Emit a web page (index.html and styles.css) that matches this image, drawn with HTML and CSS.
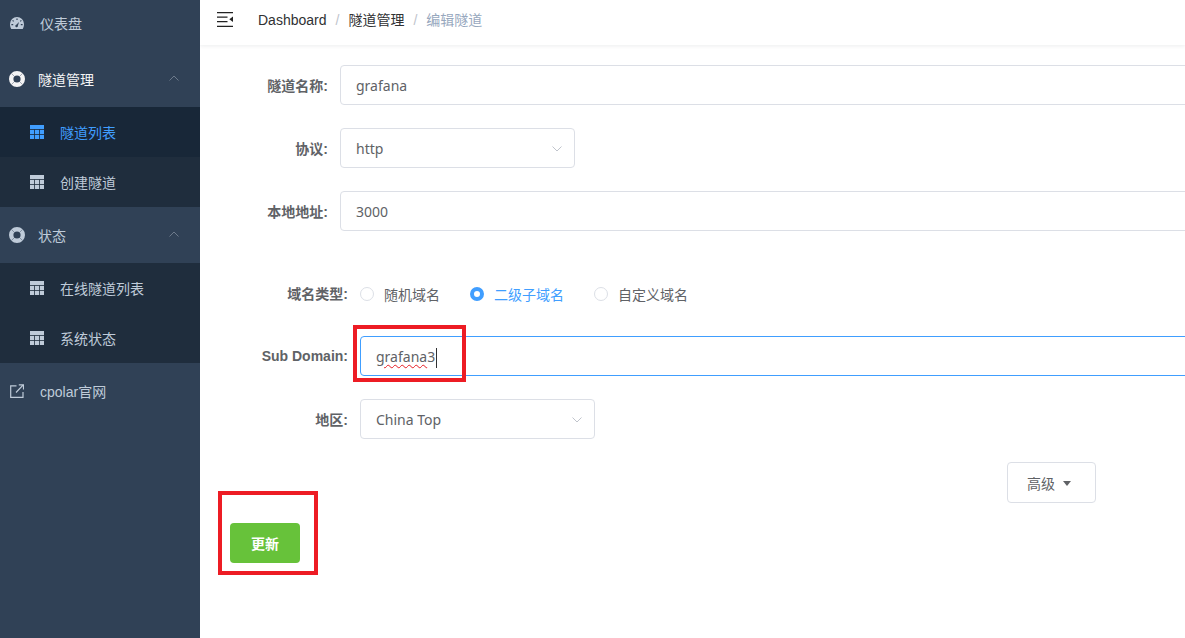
FILE: index.html
```html
<!DOCTYPE html>
<html lang="zh-CN">
<head>
    <meta charset="UTF-8">
    <title>编辑隧道</title>
    <link rel="stylesheet" href="styles.css">
</head>
<body>
<div class="app">
    <aside class="sidebar">
        <div class="menu">
            <div class="menu-item">
                <svg class="icon-top" viewBox="0 0 14 12"><path fill-rule="evenodd" d="M7 0a7 7 0 0 1 7 7c0 2-.5 3.600-1.300 5H1.300C.5 10.600 0 9 0 7a7 7 0 0 1 7-7zM6.400 1.500v1.600h1.200V1.500zM3 3l-.8.8 1 1 .8-.8zM11 3 9.900 4l.8.8 1-1zM9 5 6.300 7.700a1.300 1.300 0 1 0 1.600 1.100zM1.400 7v1.200h1.800V7zM10.800 7v1.200h1.800V7z" fill="#bfcbd9"/></svg>
                <span>仪表盘</span>
            </div>

            <div class="menu-item is-open">
                <svg class="icon-ring" viewBox="0 0 16 16"><path fill-rule="evenodd" d="M8 0a8 8 0 1 1 0 16A8 8 0 0 1 8 0zm0 4.400a3.600 3.600 0 1 0 0 7.200 3.600 3.600 0 0 0 0-7.200z" fill="#f4f4f5"/><path d="M2.300 2.300l3.200 3.200M13.700 2.300l-3.200 3.200M2.300 13.700l3.200-3.200M13.700 13.700l-3.200-3.200" stroke="#304156" stroke-width=".7" opacity=".6"/></svg>
                <span class="menu-parent">隧道管理</span>
                <svg class="chevron" viewBox="0 0 10 6"><path d="M.5 5.500 5 1l4.500 4.500" fill="none" stroke="#6d7a8b"/></svg>
            </div>
            <div class="submenu">
                <div class="sub-item active">
                    <svg class="icon-table" viewBox="0 0 14 14"><path d="M0 0h14v14H0z" fill="#409eff"/><path d="M0 4.500h14M0 9.500h14M4.500 4.500V14M9.500 4.500V14" stroke="#182738" stroke-width=".8"/></svg>
                    <span>隧道列表</span>
                </div>
                <div class="sub-item">
                    <svg class="icon-table" viewBox="0 0 14 14"><path d="M0 0h14v14H0z" fill="#bfcbd9"/><path d="M0 4.500h14M0 9.500h14M4.500 4.500V14M9.500 4.500V14" stroke="#1f2d3d" stroke-width=".8"/></svg>
                    <span>创建隧道</span>
                </div>
            </div>

            <div class="menu-item">
                <svg class="icon-ring" viewBox="0 0 16 16"><path fill-rule="evenodd" d="M8 0a8 8 0 1 1 0 16A8 8 0 0 1 8 0zm0 4.400a3.600 3.600 0 1 0 0 7.200 3.600 3.600 0 0 0 0-7.200z" fill="#bfcbd9"/><path d="M2.300 2.300l3.200 3.200M13.700 2.300l-3.200 3.200M2.300 13.700l3.200-3.200M13.700 13.700l-3.200-3.200" stroke="#304156" stroke-width=".7" opacity=".6"/></svg>
                <span class="menu-parent">状态</span>
                <svg class="chevron" viewBox="0 0 10 6"><path d="M.5 5.500 5 1l4.500 4.500" fill="none" stroke="#6d7a8b"/></svg>
            </div>
            <div class="submenu">
                <div class="sub-item">
                    <svg class="icon-table" viewBox="0 0 14 14"><path d="M0 0h14v14H0z" fill="#bfcbd9"/><path d="M0 4.500h14M0 9.500h14M4.500 4.500V14M9.500 4.500V14" stroke="#1f2d3d" stroke-width=".8"/></svg>
                    <span>在线隧道列表</span>
                </div>
                <div class="sub-item">
                    <svg class="icon-table" viewBox="0 0 14 14"><path d="M0 0h14v14H0z" fill="#bfcbd9"/><path d="M0 4.500h14M0 9.500h14M4.500 4.500V14M9.500 4.500V14" stroke="#1f2d3d" stroke-width=".8"/></svg>
                    <span>系统状态</span>
                </div>
            </div>

            <div class="menu-item">
                <svg class="icon-top" viewBox="0 0 14 14"><path d="M6.500 1.800H.7v11.500H13V8" fill="none" stroke="#bfcbd9" stroke-width="1.200"/><path d="M6 8.500 13 1.200M8.800 .8h4.700v4.700" fill="none" stroke="#bfcbd9" stroke-width="1.200"/></svg>
                <span>cpolar官网</span>
            </div>
        </div>
    </aside>

    <main class="main">
        <header class="navbar">
            <svg class="hamburger" viewBox="0 0 16 15"><path d="M0 0h16v1.300H0zM0 4.500h10.500v1.300H0zM0 9h10.500v1.300H0zM0 13.700h16V15H0z" fill="#222"/><path d="M16 4.500v5.500l-3.700-2.700z" fill="#222"/></svg>
            <nav class="breadcrumb">
                <span>Dashboard</span>
                <span class="sep">/</span>
                <span>隧道管理</span>
                <span class="sep">/</span>
                <span class="current">编辑隧道</span>
            </nav>
        </header>

        <section class="form">
            <div class="form-row">
                <label class="form-label">隧道名称:</label>
                <div class="control wide">grafana</div>
            </div>
            <div class="form-row">
                <label class="form-label">协议:</label>
                <div class="control select">
                    http
                    <svg class="select-arrow" viewBox="0 0 10 6"><path d="M.5.500 5 5 9.500.500" fill="none" stroke="#c0c4cc"/></svg>
                </div>
            </div>
            <div class="form-row">
                <label class="form-label">本地地址:</label>
                <div class="control wide">3000</div>
            </div>

            <div class="domain-group">
                <div class="form-row">
                    <label class="form-label">域名类型:</label>
                    <div class="radio-group">
                        <span class="radio"><i class="radio-dot"></i>随机域名</span>
                        <span class="radio checked"><i class="radio-dot"></i>二级子域名</span>
                        <span class="radio"><i class="radio-dot"></i>自定义域名</span>
                    </div>
                </div>
                <div class="form-row">
                    <label class="form-label">Sub Domain:</label>
                    <div class="control wide focused"><span class="misspelled">grafana</span>3<i class="caret"></i></div>
                </div>
                <div class="form-row">
                    <label class="form-label">地区:</label>
                    <div class="control select">
                        China Top
                        <svg class="select-arrow" viewBox="0 0 10 6"><path d="M.5.500 5 5 9.500.500" fill="none" stroke="#c0c4cc"/></svg>
                    </div>
                </div>
            </div>

            <div class="advanced-row">
                <button class="btn-advanced">高级<i class="caret-down"></i></button>
            </div>
            <button class="btn-submit">更新</button>
        </section>

        <div class="mark mark-domain"></div>
        <div class="mark mark-submit"></div>
    </main>
</div>
</body>
</html>
```

FILE: styles.css
```css
html, body {
    height: 100%;
    margin: 0;
}

body {
    font-family: "Liberation Sans", "Noto Sans CJK SC", sans-serif;
    font-size: 14px;
    color: #606266;
    background: #fff;
    overflow: hidden;
}

.app {
    display: flex;
    height: 100vh;
}

/* sidebar */
.sidebar {
    flex: 0 0 200px;
    background: #304156;
    overflow: hidden;
}

.menu {
    margin-top: -5px;
}

.menu-item {
    position: relative;
    display: flex;
    align-items: center;
    height: 56px;
    color: #bfcbd9;
}

.menu-item.is-open .menu-parent {
    color: #f4f4f5;
}

.icon-top {
    width: 14px;
    height: 14px;
    margin: 0 16px 0 10px;
}

.icon-ring {
    width: 16px;
    height: 16px;
    margin: 0 13px 0 9px;
}

.chevron {
    position: absolute;
    right: 21px;
    top: 24px;
    width: 10px;
    height: 6px;
}

.submenu {
    background: #1f2d3d;
}

.sub-item {
    display: flex;
    align-items: center;
    height: 50px;
    padding-left: 30px;
    color: #bfcbd9;
}

.sub-item.active {
    background: #182738;
    color: #409eff;
}

.icon-table {
    width: 14px;
    height: 14px;
    margin-right: 16px;
}

/* main area */
.main {
    position: relative;
    flex: 1;
    min-width: 0;
    overflow: hidden;
}

.navbar {
    display: flex;
    align-items: center;
    height: 45px;
    padding-left: 17px;
    box-shadow: 0 1px 4px rgba(0, 21, 41, 0.08);
}

.hamburger {
    width: 16px;
    height: 15px;
    margin: -6px 25px 0 0;
}

.breadcrumb {
    display: flex;
    align-items: baseline;
    line-height: 20px;
    color: #303133;
    margin-top: -5px;
}

.breadcrumb .sep {
    margin: 0 9px;
    color: #c0c4cc;
}

.breadcrumb .current {
    color: #97a8be;
}

/* form */
.form {
    padding: 20px 0 0 30px;
}

.form-row {
    display: flex;
    align-items: center;
    height: 40px;
    margin: 0 0 23px 10px;
}

.form-label {
    flex: 0 0 100px;
    box-sizing: border-box;
    padding-right: 12px;
    text-align: right;
    font-weight: 700;
    white-space: nowrap;
}

.control {
    position: relative;
    box-sizing: border-box;
    height: 40px;
    line-height: 40px;
    padding: 0 15px;
    border: 1px solid #dcdfe6;
    border-radius: 4px;
    font-family: "Noto Sans", "Noto Sans CJK SC", sans-serif;
    white-space: nowrap;
}

.control.wide {
    flex: 0 0 1000px;
}

.control.select {
    flex: 0 0 235px;
}

.control.focused {
    border-color: #409eff;
}

.select-arrow {
    position: absolute;
    right: 12px;
    top: 17px;
    width: 10px;
    height: 6px;
}

.misspelled {
    text-decoration: underline wavy #e51c23 1px;
    text-underline-offset: 2px;
}

.caret {
    display: inline-block;
    width: 1px;
    height: 20px;
    margin-left: 1px;
    background: #303133;
    vertical-align: middle;
}

.domain-group {
    margin: 42px 0 0 20px;
}

.radio-group {
    display: flex;
    gap: 30px;
    padding-top: 2px;
}

.radio {
    display: flex;
    align-items: center;
    gap: 10px;
}

.radio-dot {
    box-sizing: border-box;
    width: 14px;
    height: 14px;
    border: 1px solid #dcdfe6;
    border-radius: 50%;
}

.radio.checked {
    color: #409eff;
}

.radio.checked .radio-dot {
    border: 4.500px solid #409eff;
    background: #fff;
}

.advanced-row {
    display: flex;
    justify-content: flex-end;
    padding-right: 89px;
    margin-bottom: 20px;
}

.btn-advanced {
    display: flex;
    align-items: center;
    box-sizing: border-box;
    width: 89px;
    height: 41px;
    padding: 0 0 0 19px;
    border: 1px solid #dcdfe6;
    border-radius: 4px;
    background: #fff;
    color: #606266;
    font: inherit;
}

.caret-down {
    width: 0;
    height: 0;
    margin: 1px 0 0 8px;
    border-left: 4.500px solid transparent;
    border-right: 4.500px solid transparent;
    border-top: 5px solid #606266;
}

.btn-submit {
    display: block;
    width: 70px;
    height: 40px;
    border: none;
    border-radius: 4px;
    background: #67c23a;
    color: #fff;
    font: inherit;
    font-weight: 700;
}

/* red annotation boxes */
.mark {
    position: absolute;
    box-sizing: border-box;
    border-style: solid;
    border-color: #ed1c24;
}

.mark-domain {
    left: 153px;
    top: 325px;
    width: 113px;
    height: 57px;
    border-width: 4px;
}

.mark-submit {
    left: 18px;
    top: 491px;
    width: 100px;
    height: 84px;
    border-width: 4px;
}
```
